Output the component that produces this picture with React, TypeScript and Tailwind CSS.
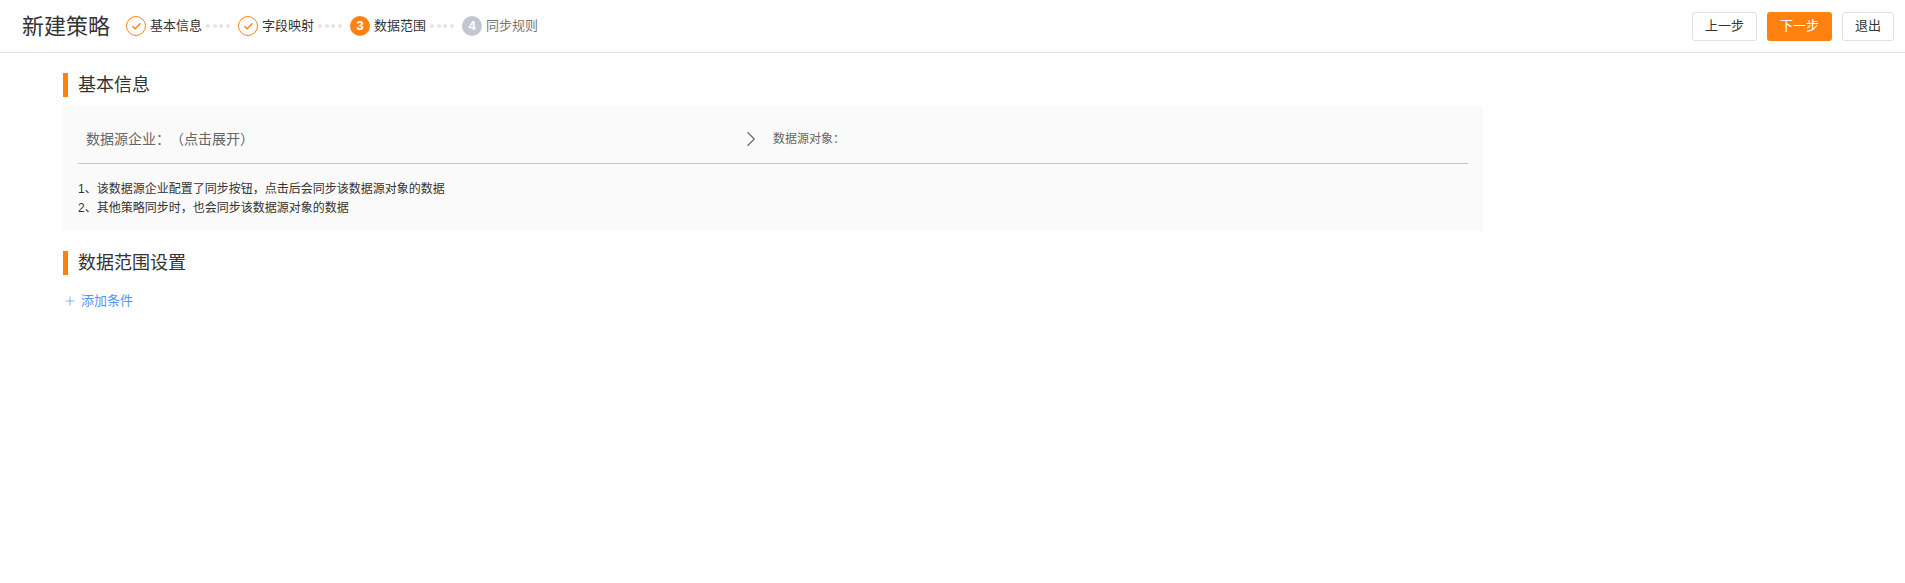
import { Check, ChevronRight, Plus } from "lucide-react";

const font = "font-['Liberation_Sans','Noto_Sans_CJK_SC',sans-serif] [text-spacing-trim:space-all]";

function StepDots() {
    return (
        <div className="flex w-6 ml-1 mr-2 justify-between">
            <span className="w-1 h-1 rounded-full bg-[#e2e4ea]"></span>
            <span className="w-1 h-1 rounded-full bg-[#e2e4ea]"></span>
            <span className="w-1 h-1 rounded-full bg-[#e2e4ea]"></span>
            <span className="w-1 h-1 rounded-full bg-[#e2e4ea]"></span>
        </div>
    );
}

function DoneStep({ label }: { label: string }) {
    return (
        <div className="flex items-center">
            <span className="w-5 h-5 rounded-full border border-[#ff8210] flex items-center justify-center">
                <Check size={11} strokeWidth={3} className="text-[#ff8210]" />
            </span>
            <span className="ml-1 text-[13px] text-[#333]">{label}</span>
        </div>
    );
}

function SectionTitle({ label }: { label: string }) {
    return (
        <div className="flex items-center h-6">
            <span className="w-[5px] h-6 bg-[#ff8210]"></span>
            <h2 className="ml-[10px] text-lg font-normal text-[#333]">{label}</h2>
        </div>
    );
}

export default function App() {
    return (
        <div className={`${font} min-h-[583px] bg-white`}>
            <header className="h-[53px] border-b border-[#dfe1e8] flex items-center justify-between pl-[22px] pr-[11px]">
                <div className="flex items-center">
                    <h1 className="text-[22px] font-normal text-[#333] mr-4">新建策略</h1>
                    <DoneStep label="基本信息" />
                    <StepDots />
                    <DoneStep label="字段映射" />
                    <StepDots />
                    <div className="flex items-center">
                        <span className="w-5 h-5 rounded-full bg-[#ff8210] text-white text-[13px] font-bold flex items-center justify-center">3</span>
                        <span className="ml-1 text-[13px] text-[#333]">数据范围</span>
                    </div>
                    <StepDots />
                    <div className="flex items-center">
                        <span className="w-5 h-5 rounded-full bg-[#c3c6d0] text-white text-[13px] font-bold flex items-center justify-center">4</span>
                        <span className="ml-1 text-[13px] text-[#777]">同步规则</span>
                    </div>
                </div>
                <div className="flex items-center gap-[10px]">
                    <button className="w-[65px] h-[29px] rounded-[3px] border border-[#dfe1e8] text-[13px] text-[#333]">上一步</button>
                    <button className="w-[65px] h-[29px] rounded-[3px] bg-[#ff8210] text-[13px] text-white">下一步</button>
                    <button className="w-[52px] h-[29px] rounded-[3px] border border-[#dfe1e8] text-[13px] text-[#333]">退出</button>
                </div>
            </header>

            <main className="pl-[63px] pt-5">
                <SectionTitle label="基本信息" />
                <section className="w-[1420px] h-[125px] mt-[9px] bg-[#fafafa] px-[15px]">
                    <div className="h-[58px] pt-2 border-b border-[#c6c6d2] flex items-center">
                        <div className="w-[686px] pl-2 flex items-center justify-between">
                            <span className="text-sm text-[#666]">数据源企业：（点击展开）</span>
                            <ChevronRight size={26} strokeWidth={1} className="text-[#666]" />
                        </div>
                        <span className="ml-[9px] text-xs text-[#666]">数据源对象：</span>
                    </div>
                    <div className="mt-4 text-xs leading-[19px] text-[#333]">
                        <p>1、该数据源企业配置了同步按钮，点击后会同步该数据源对象的数据</p>
                        <p>2、其他策略同步时，也会同步该数据源对象的数据</p>
                    </div>
                </section>

                <div className="mt-5">
                    <SectionTitle label="数据范围设置" />
                </div>
                <button className="mt-4 flex items-center text-[13px] text-[#4d94ff]">
                    <Plus size={14} strokeWidth={1.2} />
                    <span className="ml-1">添加条件</span>
                </button>
            </main>
        </div>
    );
}
